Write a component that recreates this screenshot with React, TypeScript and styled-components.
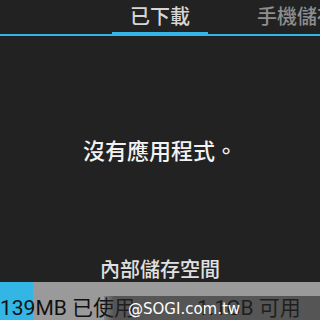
import React from 'react';
import styled, { createGlobalStyle } from 'styled-components';

const GlobalStyle = createGlobalStyle`
  html, body {
    margin: 0;
    padding: 0;
    background: #222222;
  }
  body {
    font-family: Roboto, "Noto Sans CJK TC", "Noto Sans", sans-serif;
  }
`;

const Screen = styled.div`
  width: 320px;
  height: 320px;
  background: #222222;
  display: flex;
  flex-direction: column;
  overflow: hidden;
`;

const TabBar = styled.div`
  height: 36px;
  display: flex;
  align-items: stretch;
  border-bottom: 2px solid #33b5e5;
  box-sizing: border-box;
  padding-left: 112px;
`;

const Tab = styled.div<{ $active?: boolean }>`
  width: ${(p) => (p.$active ? '96px' : 'auto')};
  flex-shrink: 0;
  display: flex;
  align-items: center;
  justify-content: ${(p) => (p.$active ? 'center' : 'flex-start')};
  font-size: 20px;
  font-weight: 500;
  color: ${(p) => (p.$active ? '#d6d6d6' : '#8e8e8e')};
  box-shadow: ${(p) => (p.$active ? 'inset 0 -2px 0 #33b5e5' : 'none')};
  padding-bottom: 4px;
  box-sizing: border-box;
  white-space: nowrap;
`;

const Spacer = styled.div`
  width: 49px;
  flex-shrink: 0;
`;

const Empty = styled.div`
  flex: 1;
  display: flex;
  align-items: center;
  justify-content: center;
  font-size: 22px;
  font-weight: 500;
  color: #f2f2f2;
  padding-top: 4px;
`;

const StorageLabel = styled.div`
  text-align: center;
  font-size: 20px;
  font-weight: 500;
  color: #e0e0e0;
  height: 24px;
  line-height: 24px;
`;

const Bar = styled.div`
  height: 38px;
  flex-shrink: 0;
  background: #9a9a9a;
  display: flex;
  align-items: center;
  position: relative;
  font-size: 21px;
  color: #111;
  padding-top: 9px;
  box-sizing: border-box;
`;

const Used = styled.div`
  position: absolute;
  left: 0;
  top: 0;
  bottom: 0;
  background: #33b5e5;
`;

const BarText = styled.span<{ $left: number }>`
  position: relative;
  margin-left: ${(p) => p.$left}px;
  white-space: nowrap;
`;

const Watermark = styled.div`
  position: absolute;
  right: 0;
  bottom: 0;
  width: 216px;
  height: 24px;
  background: linear-gradient(to right, rgba(40, 40, 40, 0.2), rgba(40, 40, 40, 0.6) 10px);
  color: #fff;
  font-family: "DejaVu Sans", sans-serif;
  font-size: 15px;
  display: flex;
  align-items: center;
  padding-left: 24px;
  padding-top: 1px;
  box-sizing: border-box;
`;

export default function App() {
  const usedPct = 33 / 320;
  return (
    <>
      <GlobalStyle />
      <Screen>
        <TabBar>
          <Tab $active>已下載</Tab>
          <Spacer />
          <Tab>手機儲存空間</Tab>
        </TabBar>
        <Empty>沒有應用程式。</Empty>
        <StorageLabel>內部儲存空間</StorageLabel>
        <Bar>
          <Used style={{ width: `${usedPct * 100}%` }} />
          <BarText $left={0}>139MB 已使用</BarText>
          <BarText $left={62}>1.1GB 可用</BarText>
          <Watermark>@SOGI.com.tw</Watermark>
        </Bar>
      </Screen>
    </>
  );
}
